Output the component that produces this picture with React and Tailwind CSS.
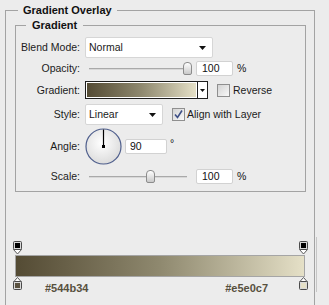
import React from 'react';

function Arrow() {
  return (
    <svg width="7" height="4" viewBox="0 0 7 4">
      <path d="M0 0h7L3.5 4z" fill="#111" />
    </svg>
  );
}

function Select({ value, width }) {
  return (
    <div className={`${width} h-[21px] bg-white border border-[#d6d6d6] rounded-[2px] flex items-center justify-between pl-[3px] pr-[6px]`}>
      <span className="text-[#1a1a1a]">{value}</span>
      <Arrow />
    </div>
  );
}

function Slider({ thumbLeft }) {
  return (
    <div className="relative w-[104px] h-[15px] ml-[4px]">
      <div className="absolute left-0 top-[7px] w-[98px] h-[2px] border-t border-[#a9a9a9] border-b-white bg-[#d8d8d8]" />
      <div
        className="absolute top-[1px] w-[9px] h-[13px] rounded-t-[4px] rounded-b-[2px] border border-[#8c8c8c] bg-gradient-to-b from-white to-[#c9c9c9]"
        style={{ left: thumbLeft }}
      />
    </div>
  );
}

function NumInput({ value, width = 'w-[37px]', pad = 'pl-[5px]' }) {
  return (
    <div className={`${width} h-[15px] bg-white border border-[#d2d2d2] rounded-[2px] flex items-center ${pad} text-[#111]`}>
      {value}
    </div>
  );
}

function Check({ checked }) {
  return (
    <div className="w-[13px] h-[13px] border border-[#8f8f8f] bg-gradient-to-br from-[#d4d4d4] to-[#f9f9f9] flex items-center justify-center">
      {checked && (
        <svg width="9" height="9" viewBox="0 0 9 9">
          <path d="M1 4.5 L3.5 7.5 L8 0.5" fill="none" stroke="#3e4f86" strokeWidth="1.6" />
        </svg>
      )}
    </div>
  );
}

function Label({ children }) {
  return <div className="w-[64px] text-right text-[#1b1b1b] mr-[5px]">{children}</div>;
}

function TopStop() {
  return (
    <svg width="9" height="14" viewBox="0 0 9 14">
      <path d="M0.5 8.5 L4.5 13 L8.5 8.5 Z" fill="#fff" stroke="#5a5a5a" />
      <rect x="0.5" y="0.5" width="8" height="8" rx="1" fill="#d9d9d9" stroke="#4a4a4a" />
      <rect x="2" y="2" width="5" height="5" fill="#000" />
    </svg>
  );
}

function BottomStop({ color }) {
  return (
    <svg width="9" height="13" viewBox="0 0 9 13">
      <path d="M4.5 0.5 L8.5 5 L0.5 5 Z" fill="#fff" stroke="#5a5a5a" />
      <rect x="0.5" y="4.5" width="8" height="8" rx="1" fill="#d9d9d9" stroke="#4a4a4a" />
      <rect x="2" y="6" width="5" height="5" fill={color} />
    </svg>
  );
}

export default function App() {
  return (
    <div className="w-[329px] h-[305px] overflow-hidden bg-[#ececec] text-[10.5px] leading-[13px] font-['Liberation_Sans',Arial,sans-serif] flex items-start">
      <fieldset className="ml-[5px] mt-[4px] w-[310px] h-[320px] border border-[#a3a3a3]">
        <legend className="ml-[12px] px-[5px] text-[11px] font-bold text-[#111] leading-[13px]">Gradient Overlay</legend>

        <fieldset className="ml-[9px] mr-[8px] mt-[2px] border border-[#a3a3a3] pt-[5px] pb-[7px]">
          <legend className="ml-[10px] px-[6px] text-[11px] font-bold text-[#111] leading-[13px]">Gradient</legend>

          <div className="flex items-center h-[21px]">
            <Label>Blend Mode:</Label>
            <Select value="Normal" width="w-[128px]" />
          </div>

          <div className="flex items-center h-[15px] mt-[3px]">
            <Label>Opacity:</Label>
            <Slider thumbLeft={94} />
            <div className="ml-[3px]">
              <NumInput value="100" />
            </div>
            <span className="ml-[4px] text-[#111]">%</span>
          </div>

          <div className="flex items-center h-[18px] mt-[5px]">
            <Label>Gradient:</Label>
            <div className="w-[123px] h-[18px] border border-[#1e1e1e] flex bg-white">
              <div className="flex-1 m-[1px] bg-gradient-to-r from-[#544b34] via-[#8f896f] to-[#e5e0c7]" />
              <div className="w-[10px] border-l border-[#1e1e1e] flex items-center justify-center">
                <svg width="5" height="3" viewBox="0 0 5 3">
                  <path d="M0 0h5L2.5 3z" fill="#111" />
                </svg>
              </div>
            </div>
            <div className="ml-[9px]">
              <Check />
            </div>
            <span className="ml-[3px] text-[#1b1b1b]">Reverse</span>
          </div>

          <div className="flex items-center h-[21px] mt-[5px]">
            <Label>Style:</Label>
            <Select value="Linear" width="w-[78px]" />
            <div className="ml-[9px]">
              <Check checked />
            </div>
            <span className="ml-[2px] text-[#1b1b1b]">Align with Layer</span>
          </div>

          <div className="flex items-center h-[37px] mt-[3px]">
            <Label>Angle:</Label>
            <svg width="37" height="37" viewBox="0 0 37 37">
              <defs>
                <radialGradient id="dial" cx="0.45" cy="0.4" r="0.6">
                  <stop offset="0" stopColor="#ffffff" />
                  <stop offset="1" stopColor="#dcdcdc" />
                </radialGradient>
              </defs>
              <circle cx="18.5" cy="18.5" r="17.5" fill="url(#dial)" stroke="#4e5e8c" strokeWidth="1.2" />
              <line x1="18.5" y1="18.5" x2="18.5" y2="1.5" stroke="#000" strokeWidth="1.2" />
              <rect x="17" y="17" width="3" height="3" fill="#000" />
            </svg>
            <div className="ml-[3px]">
              <NumInput value="90" width="w-[42px]" pad="pl-[4px]" />
            </div>
            <span className="ml-[3px] self-start mt-[9px] text-[#111]">°</span>
          </div>

          <div className="flex items-center h-[15px] mt-[4px]">
            <Label>Scale:</Label>
            <Slider thumbLeft={57} />
            <div className="ml-[3px]">
              <NumInput value="100" />
            </div>
            <span className="ml-[4px] text-[#111]">%</span>
          </div>
        </fieldset>

        <div className="mt-[49px] ml-[7px] w-[295px]">
          <div className="flex justify-between h-[14px]">
            <TopStop />
            <TopStop />
          </div>
          <div className="ml-[2px] w-[290px] h-[22px] border border-[#a5a5a5] bg-gradient-to-r from-[#544b34] via-[#8f896f] to-[#e5e0c7]" />
          <div className="flex items-start h-[20px]">
            <BottomStop color="#5a5240" />
            <span className="ml-[23px] mt-[5px] text-[11px] font-bold text-[#57503e]">#544b34</span>
            <div className="flex-1" />
            <span className="mr-[31px] mt-[5px] text-[11px] font-bold text-[#57503e]">#e5e0c7</span>
            <BottomStop color="#e5e0c7" />
          </div>
        </div>
      </fieldset>
      <div className="ml-px mt-[237px] w-px h-[55px] bg-[#c6c6c6]" />
    </div>
  );
}
